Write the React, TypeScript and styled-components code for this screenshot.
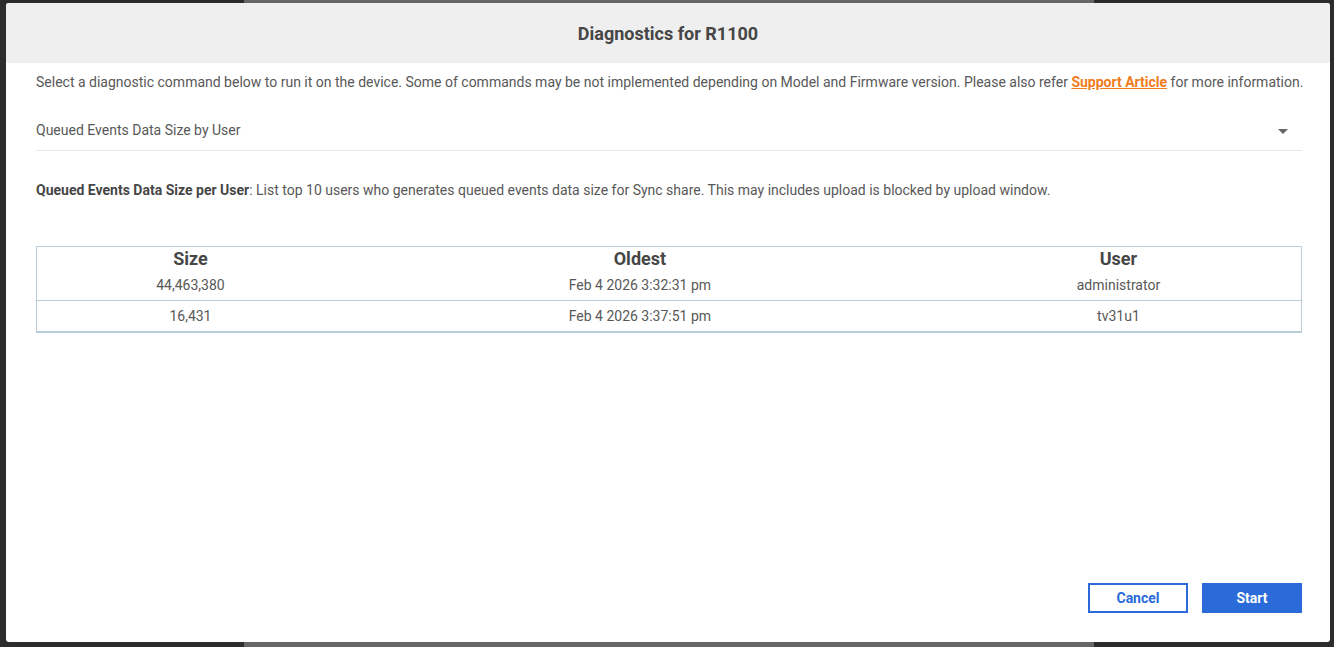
import * as React from 'react';
import styled, { createGlobalStyle } from 'styled-components';

const GlobalStyle = createGlobalStyle`
  html, body {
    margin: 0;
    padding: 0;
  }
  body {
    width: 1334px;
    height: 647px;
    overflow: hidden;
    font-family: Roboto, "Liberation Sans", Arial, sans-serif;
    background:
      linear-gradient(to right, transparent 244px, #666666 244px, #666666 1094px, transparent 1094px),
      #2c2c2c;
  }
`;

const Overlay = styled.div`
  display: flex;
  padding: 3px 4px 5px 6px;
  height: 647px;
  box-sizing: border-box;
`;

const Dialog = styled.div`
  flex: 1;
  display: flex;
  flex-direction: column;
  background: #ffffff;
  border-radius: 3px;
  overflow: hidden;
`;

const Header = styled.div`
  height: 60px;
  display: flex;
  align-items: center;
  justify-content: center;
  background: #efefef;
  flex-shrink: 0;
`;

const Title = styled.h2`
  margin: 0;
  font-size: 18px;
  font-weight: 700;
  color: #464646;
`;

const Body = styled.div`
  flex: 1;
  display: flex;
  flex-direction: column;
  padding: 9px 28px 29px 30px;
  color: #585858;
  font-size: 14px;
`;

const Intro = styled.p`
  margin: 0;
  line-height: 20px;
  white-space: nowrap;
`;

const Link = styled.a`
  color: #f07c1c;
  font-weight: 700;
  text-decoration: underline;
`;

const Select = styled.div`
  margin-top: 18px;
  height: 40px;
  display: flex;
  align-items: center;
  justify-content: space-between;
  border-bottom: 1px solid #e6e6e6;
  padding-right: 14px;
`;

const Caret = styled.span`
  width: 0;
  height: 0;
  border-left: 5px solid transparent;
  border-right: 5px solid transparent;
  border-top: 5px solid #666666;
  margin-top: 2px;
`;

const Description = styled.p`
  margin: 29px 0 0;
  line-height: 20px;
  b {
    color: #464646;
  }
`;

const Table = styled.table`
  margin-top: 46px;
  width: 100%;
  border-collapse: collapse;
  border: 1px solid #b9cdd8;
  border-bottom-width: 2px;
  color: #585858;
`;

const Th = styled.th<{ $w: string }>`
  width: ${(p) => p.$w};
  font-size: 18px;
  font-weight: 700;
  color: #464646;
  line-height: 23px;
  padding: 0;
`;

const Row = styled.tr<{ $divider?: boolean }>`
  border-top: ${(p) => (p.$divider ? '1px solid #b9cdd8' : 'none')};
`;

const Td = styled.td`
  text-align: center;
  font-size: 14px;
  height: 30px;
  padding: 0;
`;

const Footer = styled.div`
  margin-top: auto;
  display: flex;
  justify-content: flex-end;
  gap: 14px;
`;

const Button = styled.button<{ $primary?: boolean }>`
  width: 100px;
  height: 30px;
  font-family: inherit;
  font-size: 14px;
  font-weight: 700;
  cursor: pointer;
  border: 2px solid #2a6bd9;
  background: ${(p) => (p.$primary ? '#2a6bd9' : '#ffffff')};
  color: ${(p) => (p.$primary ? '#ffffff' : '#2a6bd9')};
`;

const rows = [
  { size: '44,463,380', oldest: 'Feb 4 2026 3:32:31 pm', user: 'administrator' },
  { size: '16,431', oldest: 'Feb 4 2026 3:37:51 pm', user: 'tv31u1' },
];

export default function App() {
  return (
    <>
      <GlobalStyle />
      <Overlay>
        <Dialog>
          <Header>
            <Title>Diagnostics for R1100</Title>
          </Header>
          <Body>
            <Intro>
              Select a diagnostic command below to run it on the device. Some of commands may be not implemented
              depending on Model and Firmware version. Please also refer <Link href="#">Support Article</Link> for
              more information.
            </Intro>
            <Select>
              <span>Queued Events Data Size by User</span>
              <Caret />
            </Select>
            <Description>
              <b>Queued Events Data Size per User</b>: List top 10 users who generates queued events data size for
              Sync share. This may includes upload is blocked by upload window.
            </Description>
            <Table>
              <thead>
                <tr>
                  <Th $w="24.3%">Size</Th>
                  <Th $w="46.8%">Oldest</Th>
                  <Th $w="28.9%">User</Th>
                </tr>
              </thead>
              <tbody>
                {rows.map((r, i) => (
                  <Row key={r.user} $divider={i > 0}>
                    <Td>{r.size}</Td>
                    <Td>{r.oldest}</Td>
                    <Td>{r.user}</Td>
                  </Row>
                ))}
              </tbody>
            </Table>
            <Footer>
              <Button>Cancel</Button>
              <Button $primary>Start</Button>
            </Footer>
          </Body>
        </Dialog>
      </Overlay>
    </>
  );
}
